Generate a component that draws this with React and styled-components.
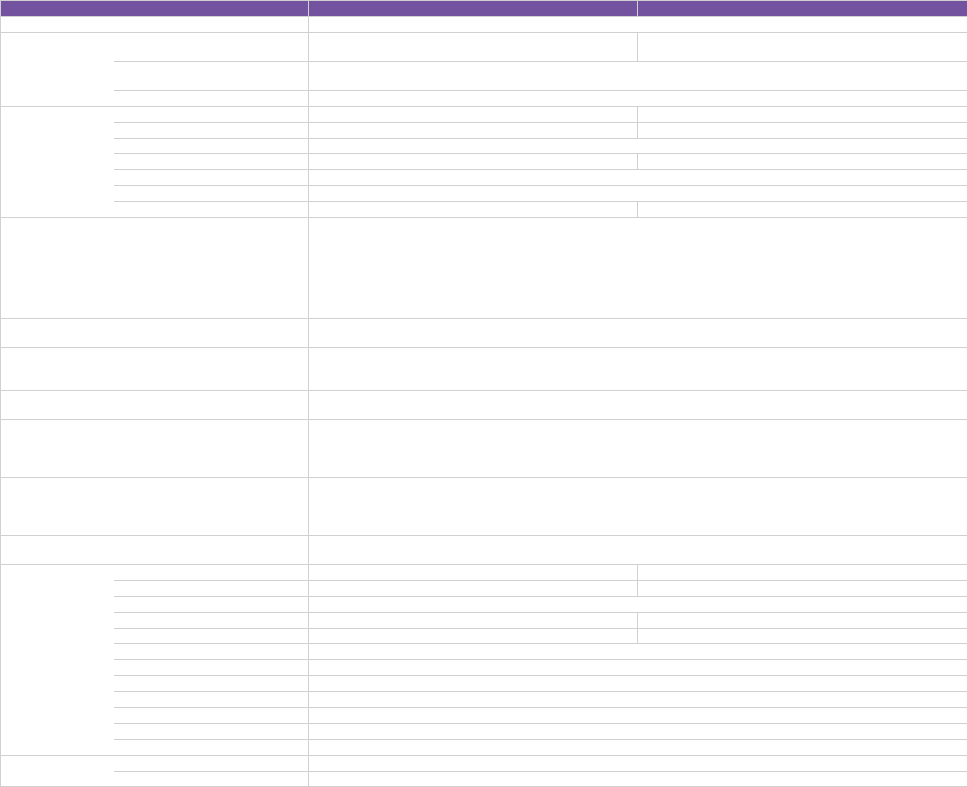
import React from 'react';
import styled, { createGlobalStyle } from 'styled-components';

const GlobalStyle = createGlobalStyle`
    body {
        margin:0;
        background:#ffffff;
        font-family:"Liberation Sans", Arial, sans-serif;
        font-size:12px;
    }
`;

const Table = styled.table`
    width:967px;
    border-collapse:collapse;
    table-layout:fixed;
    border:1px solid #d0d0d0;
`;

const Row = styled.tr`
    height:${(p) => p.$h}px;
`;

const HeadCell = styled.th`
    background:#73529f;
    color:#ffffff;
    border:1px solid #d0d0d0;
    padding:0;
    font-weight:normal;
    text-align:left;
`;

const Cell = styled.td`
    border:1px solid #d0d0d0;
    padding:0;
    vertical-align:top;
`;

// the group label has no line between it and its sub rows
const GroupCell = styled(Cell)`
    border-right-style:hidden;
`;

// s = split (col 3 and col 4), m = merged
const groups = [
    { type: 'single', h: 15.9 },
    { type: 'group', subs: [[29, 's'], [29, 'm'], [15.9, 'm']] },
    { type: 'group', subs: ['s', 's', 'm', 's', 'm', 'm', 's'].map((k) => [15.9, k]) },
    { type: 'single', h: 101 },
    { type: 'single', h: 29 },
    { type: 'single', h: 43 },
    { type: 'single', h: 29 },
    { type: 'single', h: 58 },
    { type: 'single', h: 58 },
    { type: 'single', h: 29 },
    { type: 'group', subs: ['s', 's', 'm', 's', 's', 'm', 'm', 'm', 'm', 'm', 'm', 'm'].map((k) => [15.9, k]) },
    { type: 'group', subs: [[15.9, 'm'], [15.9, 'm']] },
];

const ValueCells = ({ kind }) => {
    if (kind === 's') {
        return <>
            <Cell></Cell>
            <Cell></Cell>
        </>;
    }
    return <Cell colSpan={2}></Cell>;
};

const Group = ({ group }) => {
    if (group.type === 'single') {
        return <Row $h={group.h}>
            <Cell colSpan={2}></Cell>
            <Cell colSpan={2}></Cell>
        </Row>;
    }
    return <>
        {group.subs.map(([h, kind], i) => (
            <Row key={i} $h={h}>
                {i === 0 && <GroupCell rowSpan={group.subs.length}></GroupCell>}
                <Cell></Cell>
                <ValueCells kind={kind} />
            </Row>
        ))}
    </>;
};

export default function App() {
    return <>
        <GlobalStyle />
        <Table>
            <colgroup>
                <col style={{ width: 113 }} />
                <col style={{ width: 195 }} />
                <col style={{ width: 329 }} />
                <col style={{ width: 330 }} />
            </colgroup>
            <thead>
                <Row $h={16}>
                    <HeadCell colSpan={2}></HeadCell>
                    <HeadCell></HeadCell>
                    <HeadCell></HeadCell>
                </Row>
            </thead>
            <tbody>
                {groups.map((g, i) => <Group key={i} group={g} />)}
            </tbody>
        </Table>
    </>;
}
